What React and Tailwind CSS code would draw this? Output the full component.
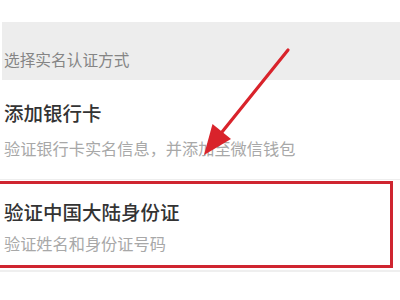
export default function App() {
  const font = { fontFamily: '"Noto Sans CJK SC", "Noto Sans", sans-serif' };
  return (
    <div className="relative w-[400px] h-[300px] overflow-hidden bg-white" style={font}>
      <div className="flex flex-col">
        <div className="mt-[22px] ml-[2px] h-[58px] bg-[#ededed] pt-[28px] pl-[2px]">
          <div className="text-[15.7px] leading-[20px] text-[#858585]">选择实名认证方式</div>
        </div>
        <div className="pt-[20px] pl-[4px]">
          <div className="text-[19.5px] leading-[26px] font-medium text-[#333333]">添加银行卡</div>
          <div className="mt-[11px] text-[16.2px] leading-[22px] text-[#a8a8a8]">验证银行卡实名信息，并添加至微信钱包</div>
        </div>
        <div className="mt-[20px] h-[1px] bg-[#eeeeee]" />
        <div className="mt-[1px] ml-[-4px] w-[397px] h-[87px] border-[3px] border-[#cf2530] pl-[5px] pt-[15px]">
          <div className="text-[19.5px] leading-[26px] font-medium text-[#333333]">验证中国大陆身份证</div>
          <div className="mt-[7px] text-[16.2px] leading-[22px] text-[#a8a8a8]">验证姓名和身份证号码</div>
        </div>
        <div className="mt-[2px] h-[2px] bg-[#efefef]" />
      </div>
      <svg className="absolute left-0 top-0" width="400" height="300" viewBox="0 0 400 300">
        <line x1="288" y1="50" x2="218" y2="137" stroke="#d9232b" strokeWidth="3.2" strokeLinecap="round" />
        <polygon points="204,155 212.5,124 231,139" fill="#d9232b" />
      </svg>
    </div>
  );
}
